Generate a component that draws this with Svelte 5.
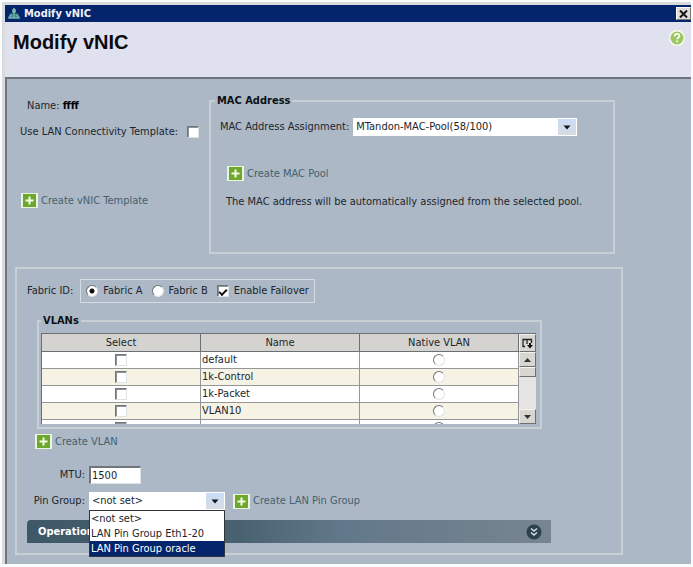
<script lang="ts">
	type Vlan = { id: string; name: string };

	const vlans: Vlan[] = [
		{ id: 'default', name: 'default' },
		{ id: '1k-control', name: '1k-Control' },
		{ id: '1k-packet', name: '1k-Packet' },
		{ id: 'vlan10', name: 'VLAN10' },
		{ id: 'more', name: '' }
	];
	const pinGroups = ['<not set>', 'LAN Pin Group Eth1-20', 'LAN Pin Group oracle'];

	let useTemplate = $state(false);
	let fabric = $state('A');
	let failover = $state(true);
	let mtu = $state('1500');
	let pinGroup = $state('<not set>');
	let highlighted = $state(2);
	let pinOpen = $state(true);
	let nativeVlan = $state('');

	function pick(group: string) {
		pinGroup = group;
		pinOpen = false;
	}

	function togglePin(e: MouseEvent) {
		e.preventDefault();
		pinOpen = !pinOpen;
	}
</script>

{#snippet createLink(label: string)}
	<a class="create" href="#create">
		<svg width="17" height="15" viewBox="0 0 17 15" aria-hidden="true">
			<rect width="17" height="15" fill="#e9f5dc" />
			<rect x="2" y="1" width="13" height="13" fill="#6da82c" />
			<path d="M8.5 3.5v8M4.5 7.5h8" stroke="#f4fbe9" stroke-width="2" />
		</svg>
		<span>{label}</span>
	</a>
{/snippet}

{#snippet arrow()}
	<span class="arrow" aria-hidden="true">
		<svg width="8" height="5" viewBox="0 0 8 5"><path d="M0.5 0.5h7L4 4.5z" fill="#10131a" /></svg>
	</span>
{/snippet}

<div class="window">
	<div class="titlebar">
		<svg width="14" height="13" viewBox="0 0 14 13" aria-hidden="true">
			<path d="M7 0.500l2 2.500-.5 3h-3L5 3z" fill="#78b5aa" />
			<path d="M0.500 11.500L3 6.500h8l2.500 5z" fill="#3d8590" />
			<path d="M7 4v7M1.500 11h11M4.500 7.500l-2 3M9.500 7.500l2 3" fill="none" stroke="#8fc4b8" />
		</svg>
		<span class="caption">Modify vNIC</span>
		<button class="close" aria-label="Close">
			<svg width="9" height="8" viewBox="0 0 9 8"><path d="M1 0.500l7 7M8 0.500l-7 7" stroke="#151515" stroke-width="2" /></svg>
		</button>
	</div>

	<header>
		<h1>Modify vNIC</h1>
		<button class="help" aria-label="Help">
			<svg width="16" height="16" viewBox="0 0 16 16">
				<circle cx="8" cy="8" r="8" fill="#f3faea" />
				<circle cx="8" cy="8" r="6.500" fill="#9cc662" />
				<path d="M5.700 6.200c0-3 4.800-3 4.800-.2 0 1.500-2.300 1.600-2.300 3.200M8.200 10.600v1.700" fill="none" stroke="#fff" stroke-width="1.700" />
			</svg>
		</button>
	</header>

	<main>
		<div class="top">
			<div class="identity">
				<p class="name">Name: <b>ffff</b></p>
				<label class="template">
					Use LAN Connectivity Template:
					<input type="checkbox" bind:checked={useTemplate} />
				</label>
				{@render createLink('Create vNIC Template')}
			</div>

			<fieldset class="mac">
				<legend>MAC Address</legend>
				<div class="row">
					<label for="mac-pool">MAC Address Assignment:</label>
					<div class="combo pool">
						<select id="mac-pool">
							<option>MTandon-MAC-Pool(58/100)</option>
						</select>
						{@render arrow()}
					</div>
				</div>
				<div class="pool-info">
					{@render createLink('Create MAC Pool')}
					<p>The MAC address will be automatically assigned from the selected pool.</p>
				</div>
			</fieldset>
		</div>

		<section class="panel">
			<div class="row">
				<span id="fabric-label">Fabric ID:</span>
				<div class="fabric" role="group" aria-labelledby="fabric-label">
					<label><input type="radio" name="fabric" value="A" bind:group={fabric} />Fabric A</label>
					<label><input type="radio" name="fabric" value="B" bind:group={fabric} />Fabric B</label>
					<label><input type="checkbox" bind:checked={failover} />Enable Failover</label>
				</div>
			</div>

			<fieldset class="vlans">
				<legend>VLANs</legend>
				<div class="grid">
					<div class="scroller">
						<table>
							<thead>
								<tr><th>Select</th><th>Name</th><th>Native VLAN</th></tr>
							</thead>
							<tbody>
								{#each vlans as vlan (vlan.id)}
									<tr>
										<td class="mid"><input type="checkbox" aria-label={`Select ${vlan.name}`} /></td>
										<td>{vlan.name}</td>
										<td class="mid">
											<input
												type="radio"
												name="native"
												value={vlan.id}
												bind:group={nativeVlan}
												aria-label={`Native ${vlan.name}`}
											/>
										</td>
									</tr>
								{/each}
							</tbody>
						</table>
					</div>
					<div class="scrollbar">
						<button class="columns" aria-label="Columns">
							<svg width="11" height="11" viewBox="0 0 11 11">
								<path d="M3 8.500H1V1.500h8.500V5M5 1.500V6" fill="none" stroke="#222" stroke-width="1.300" />
								<path d="M7 5h2v2h2L8 10.500 5 7h2z" fill="#111" />
							</svg>
						</button>
						<button aria-label="Scroll up">
							<svg width="7" height="4" viewBox="0 0 7 4"><path d="M0 4h7L3.500 0z" fill="#333" /></svg>
						</button>
						<div class="thumb"></div>
						<div class="track"></div>
						<button aria-label="Scroll down">
							<svg width="7" height="4" viewBox="0 0 7 4"><path d="M0 0h7L3.500 4z" fill="#333" /></svg>
						</button>
					</div>
				</div>
			</fieldset>

			<div class="create-vlan">{@render createLink('Create VLAN')}</div>

			<div class="form">
				<label for="mtu">MTU:</label>
				<input id="mtu" class="mtu" type="text" bind:value={mtu} />
				<label for="pin-group">Pin Group:</label>
				<div class="row">
					<div class="combo pin">
						<select id="pin-group" bind:value={pinGroup} onmousedown={togglePin}>
							{#each pinGroups as group}
								<option>{group}</option>
							{/each}
						</select>
						{@render arrow()}
						{#if pinOpen}
							<div class="menu" role="listbox" aria-label="Pin Group">
								{#each pinGroups as group, i}
									<button
										role="option"
										aria-selected={i === highlighted}
										class:active={i === highlighted}
										onmouseenter={() => (highlighted = i)}
										onclick={() => pick(group)}>{group}</button
									>
								{/each}
							</div>
						{/if}
					</div>
					{@render createLink('Create LAN Pin Group')}
				</div>
			</div>

			<button class="params">
				<span>Operational Parameters</span>
				<svg width="16" height="16" viewBox="0 0 16 16" aria-hidden="true">
					<circle cx="8" cy="8" r="7.500" fill="#2c4250" />
					<path d="M5 4.500l3 2.500 3-2.500M5 8.500l3 2.500 3-2.500" fill="none" stroke="#d5dde2" stroke-width="1.600" />
				</svg>
			</button>
		</section>
	</main>
</div>

<style>
	:global(body) {
		background: #fbfcfd;
	}
	.window {
		margin: 2px 2px 3px;
		border: solid #d9dade;
		border-width: 3px 0 0 3px;
		font: 11px/14px 'DejaVu Sans Condensed', 'DejaVu Sans', sans-serif;
		color: #20262d;
	}
	button,
	input,
	select {
		font: inherit;
		color: inherit;
		margin: 0;
		padding: 0;
		border: 0;
		border-radius: 0;
		box-sizing: border-box;
	}
	svg {
		display: block;
		flex: none;
	}
	p {
		margin: 0;
	}
	.titlebar {
		display: flex;
		align-items: center;
		height: 17px;
		padding: 0 0 0 2px;
		gap: 3px;
		background: #04246c;
		color: #eef1f8;
	}
	.caption {
		flex: 1;
		font-weight: bold;
	}
	.close {
		display: grid;
		place-items: center;
		width: 15px;
		height: 13px;
		background: #dfdcd8;
		border: 1px solid #f8f8f8;
		border-right-color: #777;
		border-bottom-color: #777;
	}
	header {
		display: flex;
		justify-content: space-between;
		align-items: flex-start;
		height: 55px;
		padding: 8px 6px 0 8px;
		box-sizing: border-box;
		background: #dfe1ef;
	}
	h1 {
		margin: 0;
		font: bold 20px/24px 'Liberation Sans', Arial, sans-serif;
		color: #0b0b0d;
	}
	.help {
		background: none;
	}
	main {
		border: solid #6f757f;
		border-width: 2px 0 0 2px;
		padding: 15px 68px 9px 8px;
		background: #acb8c5;
	}
	.top {
		display: grid;
		grid-template-columns: 194px 1fr;
		padding-right: 8px;
	}
	.identity {
		display: flex;
		flex-direction: column;
		align-items: flex-start;
		padding: 5px 0 0 5px;
	}
	.name {
		padding-left: 7px;
		margin-bottom: 12px;
	}
	.name b {
		color: #000;
	}
	.template {
		display: flex;
		align-items: center;
		gap: 9px;
		margin-bottom: 54px;
		white-space: nowrap;
	}
	fieldset {
		min-width: 0;
		margin: 0;
		border: 2px solid #c9d0d5;
	}
	legend {
		padding: 0 2px;
		font-weight: bold;
		color: #0d1116;
	}
	.mac {
		height: 160px;
		box-sizing: border-box;
		padding: 10px 9px 0;
	}
	.mac legend {
		margin-left: -5px;
	}
	.row {
		display: flex;
		align-items: center;
		gap: 4px;
		white-space: nowrap;
	}
	.pool-info {
		padding: 30px 6px 0;
	}
	.pool-info p {
		margin-top: 14px;
	}
	.create {
		display: inline-flex;
		align-items: center;
		gap: 3px;
		padding-left: 1px;
		color: #44616f;
		text-decoration: none;
		vertical-align: top;
	}
	.combo {
		position: relative;
		display: flex;
		height: 18px;
		background: #fff;
	}
	.combo.pool {
		width: 224px;
	}
	.combo.pin {
		width: 136px;
		margin-right: 3px;
	}
	.combo select {
		appearance: none;
		width: 100%;
		padding-left: 3px;
		background: transparent;
	}
	.arrow {
		position: absolute;
		top: 1px;
		right: 1px;
		bottom: 1px;
		display: grid;
		place-items: center;
		width: 18px;
		background: linear-gradient(#c9dcf8, #d8dbe2);
		pointer-events: none;
	}
	.menu {
		position: absolute;
		top: 100%;
		left: 0;
		right: 0;
		z-index: 1;
		background: #fff;
		border: 1px solid #30343b;
	}
	.menu button {
		display: block;
		width: 100%;
		height: 15px;
		padding-left: 1px;
		text-align: left;
		background: none;
		white-space: nowrap;
	}
	.menu .active {
		background: #04246c;
		color: #fff;
	}
	input[type='checkbox'],
	input[type='radio'] {
		appearance: none;
		flex: none;
		width: 12px;
		height: 12px;
		background: #fff;
		border: 1px solid #6f757a;
		border-right-color: #dfe2e4;
		border-bottom-color: #dfe2e4;
	}
	input[type='checkbox'] {
		display: grid;
		place-items: center;
		box-shadow: inset 1px 1px #8e9396;
	}
	input[type='checkbox']:checked::before {
		content: '';
		width: 6px;
		height: 3px;
		border: solid #111;
		border-width: 0 0 2px 2px;
		transform: rotate(-45deg);
	}
	input[type='radio'] {
		border-radius: 50%;
	}
	input[type='radio']:checked {
		background: radial-gradient(circle, #111 2px, #fff 3px);
	}
	.panel {
		margin-top: 13px;
		padding: 10px;
		border: 2px solid #c9d0d5;
	}
	.fabric {
		display: flex;
		gap: 9px;
		margin-left: 3px;
		padding: 4px 5px;
		border: 1px solid #d5dce1;
	}
	.fabric label {
		display: flex;
		align-items: center;
		gap: 5px;
	}
	.vlans {
		margin: 11px 69px 0 10px;
		padding: 5px 4px 3px 2px;
	}
	.grid {
		display: flex;
		height: 91px;
		border: solid #6c7075;
		border-width: 1px 0 0 1px;
		box-sizing: border-box;
		background: #fff;
	}
	.scroller {
		flex: 1;
		overflow: hidden;
	}
	table {
		width: 100%;
		table-layout: fixed;
		border-collapse: separate;
		border-spacing: 0;
		line-height: 14px;
	}
	th,
	td {
		box-sizing: border-box;
		padding: 0 1px;
		border: solid #94979a;
		border-width: 0 1px 1px 0;
		background: #fff;
		overflow: hidden;
	}
	th {
		height: 18px;
		background: #d4d3cf;
		border-color: #6c7075;
		font-weight: normal;
	}
	td {
		height: 17px;
	}
	tbody tr:nth-child(even) td {
		background: #f6f2e4;
	}
	.mid input {
		margin: 1px auto;
		display: grid;
	}
	.scrollbar {
		display: flex;
		flex-direction: column;
		width: 17px;
		background: #e5e4e2;
	}
	.scrollbar button,
	.thumb {
		box-sizing: border-box;
		display: grid;
		place-items: center;
		height: 15px;
		background: #d8d6d1;
		border: 1px solid #f3f3f1;
		border-right-color: #6c7075;
		border-bottom-color: #6c7075;
	}
	.scrollbar .columns {
		height: 18px;
	}
	.scrollbar .thumb {
		height: 10px;
	}
	.track {
		flex: 1;
	}
	.create-vlan {
		padding: 5px 7px;
	}
	.form {
		display: grid;
		grid-template-columns: 58px 1fr;
		align-items: center;
		gap: 8px 4px;
		margin-top: 12px;
	}
	.form > label {
		text-align: right;
		white-space: nowrap;
	}
	.mtu {
		width: 52px;
		height: 18px;
		padding-left: 1px;
		background: #fff;
		border: 1px solid #dfe2e4;
		border-top: 2px solid #6f757a;
		border-left: 2px solid #6f757a;
	}
	.params {
		display: flex;
		align-items: center;
		justify-content: space-between;
		width: calc(100% - 60px);
		height: 23px;
		margin-top: 10px;
		padding: 0 9px 0 11px;
		border-radius: 4px 0 0 0;
		background: linear-gradient(90deg, #3e5867, #48616f 40%, #62788a 60%, #778590);
		color: #fff;
		font-weight: bold;
	}
</style>
